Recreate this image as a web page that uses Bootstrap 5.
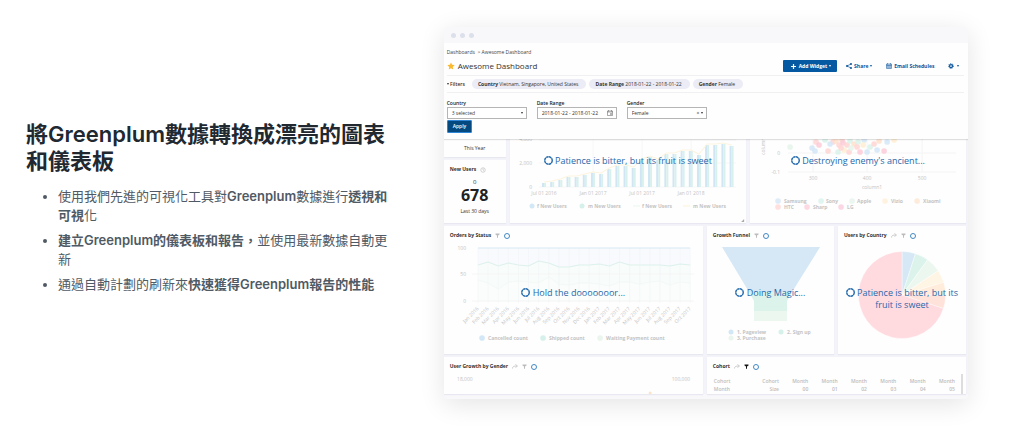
<!DOCTYPE html>
<html lang="zh-Hant">
<head>
<meta charset="utf-8">
<meta name="viewport" content="width=device-width, initial-scale=1">
<title>Greenplum</title>
<link href="https://cdn.jsdelivr.net/npm/bootstrap@5.3.0/dist/css/bootstrap.min.css" rel="stylesheet">
<style>
body{font-family:Inter,"Noto Sans CJK TC",sans-serif;color:#505a64;background:#fff}
.feature{padding:27px 0 33px}
.copy{padding-left:26px;padding-right:32px}
.shot{padding-left:17px;padding-right:56px}
h2{font-size:22px;line-height:27px;font-weight:600;color:#212830;margin-bottom:12px}
.copy ul{padding-left:32px;font-size:13px;line-height:19px;margin-bottom:12px}
.copy li+li{margin-top:6px}
.copy strong{font-weight:600}
.app{font:5px/7px "Open Sans",sans-serif;color:#333;background:#fefefe;border-radius:4px;overflow:hidden;box-shadow:0 5px 26px rgba(0,0,0,.11)}
.chrome{height:16px;padding-left:7px;gap:4px;background:#f8f8fb}
.chrome i{width:5px;height:5px;border-radius:50%;background:#dce0ea}
.head{padding:6px 4px 6px 3px;box-shadow:0 1px 1px rgba(0,0,0,.12);position:relative;z-index:2;background:#fefefe}
.crumbs{color:#444;padding-bottom:1px}
.crumbs a{color:inherit;text-decoration:none}
.titlebar{height:19px;border-bottom:1px solid #f0f0f3}
h3{font-size:8px;line-height:12px;font-weight:400;margin:0;padding-left:3px;color:#333}
.acts{gap:14px;padding-right:5px}
.act{font-size:5px;line-height:7px;font-weight:700;color:#0b559c;border:0;padding:0;border-radius:0;white-space:nowrap}
.act-main,.act-main:hover{background:#0559a2;color:#fff;height:12px;padding:0 6px 0 8px;border-radius:1px;margin-right:-5px}
.car{display:inline-block;border:1px solid transparent;border-top:2px solid;border-bottom:0;vertical-align:1px}
.filters{height:17px;border-bottom:1px solid #f0f0f3;gap:3px}
.chip{background:#ebecf6;border-radius:6px;height:10px;line-height:10px;padding:0 8px 0 6px;font-weight:500}
.chip b{font-weight:700}
.fields{gap:10px;padding-top:6px}
.fld{width:80px;position:relative}
.fld label{display:block;line-height:8px;color:#222;font-weight:600}
.fld select,.fld input{display:block;width:100%;height:12px;border:1px solid #b5b5b5;border-radius:0;background:#fff;font-size:5px;font-weight:500;line-height:8px;padding:0 4px;color:#333;appearance:none}
.mark-r{position:absolute;right:4px;bottom:2px;line-height:8px;pointer-events:none}
.apply{display:block;background:#044a80;color:#fff;border:1px solid #2f86d6;border-radius:1px;font-size:5px;line-height:7px;font-weight:600;padding:2px 5px;height:13px;margin-top:1px}
.board{background:#f3f3f9;padding-right:2px;border-bottom:5px solid #f8f8fb}
.tiles{display:grid;gap:4px;margin-bottom:3px}
.t1{grid-template-columns:62fr 236fr 216fr}
.t2{grid-template-columns:259fr 127fr 128fr}
.t3{grid-template-columns:259fr 259fr;margin:0}
.stack{gap:3px}
.tile{background:#fefefe;position:relative;min-width:0;box-shadow:0 1px 1px #e8e8f0;overflow:hidden}
.tile svg.plot{display:block;width:100%;height:auto}
.tile h4{position:absolute;left:6px;top:6px;margin:0;font-size:5px;line-height:7px;font-weight:700;color:#333;display:flex;gap:4px;align-items:center;white-space:nowrap}
.busy{position:absolute;left:0;right:0;top:61px;font-size:9px;line-height:12px;text-align:center;color:#1f68ab;padding:0 3px}
.t1 .busy{top:16px}
.busy svg{width:9px;height:9px;vertical-align:-1px}
.spin-s{width:6px;height:6px;border:1px solid #4389c6;border-radius:50%}
.plot text{font-size:5px;fill:#c4c4c4;font-family:"Open Sans",sans-serif}
.plot .lg text{font-weight:700;fill:#c4c4c4}
.e{text-anchor:end}.m{text-anchor:middle}
.year{padding:6px 0 5px}
.users{padding-top:18px}
.cohort-tile{padding:0 11px 0 7px}
.cohort{width:100%;table-layout:fixed;color:#bdbdbd;margin-top:20px;line-height:8px}
.cohort th{font-weight:600;text-align:right;padding:0;line-height:8px}
.cohort th:first-child{text-align:left}
.rail{position:absolute;right:3px;top:17px;bottom:0;width:2px;background:#ddd}
.zero{font-size:6px;line-height:8px}
.big{font-size:16px;line-height:18px;font-weight:700;color:#222}
</style>
</head>
<body>
<svg class="d-none"><symbol id="ring" viewBox="0 0 18 18"><circle cx="9" cy="9" r="7.500" fill="none" stroke="#1f68ab" stroke-width="2.800" stroke-dasharray="5.200 .69"/></symbol>
<symbol id="funnel" viewBox="0 0 10 10"><path d="M1 1h8v2L6 5v5L4 9V5L1 3z"/></symbol>
<symbol id="arrow" viewBox="0 0 12 10"><path d="M1 9c0-4 3-5 8-5M7 1l4 3-4 3" fill="none" stroke="#bbb" stroke-width="1.500"/></symbol></svg>
<section class="feature container-fluid px-0 overflow-hidden">
<div class="row g-0 align-items-center">
<div class="col-5 copy">
<h2>將Greenplum數據轉換成漂亮的圖表和儀表板</h2>
<ul>
<li>使用我們先進的可視化工具對<strong>Greenplum</strong>數據進行<strong>透視和可視</strong>化</li>
<li><strong>建立Greenplum的儀表板和報告，</strong>並使用最新數據自動更新</li>
<li>通過自動計劃的刷新來<strong>快速獲得Greenplum報告的性能</strong></li>
</ul>
</div>
<div class="col-7 shot">
<div class="app">
<div class="chrome d-flex align-items-center"><i></i><i></i><i></i></div>
<header class="head">
<div class="crumbs"><a href="#">Dashboards</a> &nbsp;&gt;&nbsp;Awesome Dashboard</div>
<div class="titlebar d-flex align-items-center">
<svg width="8" height="8" viewBox="0 0 20 20" fill="#fbb92f"><path d="M10 1l2.800 5.900 6.300.9-4.600 4.500 1.100 6.400L10 15.600l-5.600 3.100 1.100-6.400L.9 7.800l6.300-.9z"/></svg>
<h3 class="flex-grow-1">Awesome Dashboard</h3>
<div class="acts d-flex align-items-center">
<button class="act act-main">
<svg width="5" height="5" viewBox="0 0 10 10" stroke="#fff" stroke-width="2.400"><path d="M5 0v10M0 5h10"/></svg>
&nbsp;Add Widget <span class="car"></span></button>
<button class="act bg-transparent"><svg width="6" height="6" viewBox="0 0 12 12" fill="#0b559c" stroke="#0b559c" stroke-width="1.300"><path d="M10 2L2 6l8 4" fill="none"/><circle cx="10" cy="2" r="1.500"/><circle cx="2" cy="6" r="1.500"/><circle cx="10" cy="10" r="1.500"/></svg>&nbsp; Share <span class="car"></span></button>
<button class="act bg-transparent"><svg width="6" height="6" viewBox="0 0 12 12" fill="none" stroke="#0b559c"><path d="M1 2h10v9H1zM1 4h10M1 5h10M1 8h10M4 5v6M8 5v6M3 0v3M9 0v3"/></svg>&nbsp; Email Schedules</button>
<button class="act bg-transparent" aria-label="Settings"><svg width="6" height="6" viewBox="0 0 12 12" fill="none" stroke="#0b559c"><circle cx="6" cy="6" r="3" stroke-width="2.500"/><circle cx="6" cy="6" r="4.800" stroke-width="1.800" stroke-dasharray="2 1.770"/></svg>&nbsp; <span class="car"></span></button>
</div>
</div>
<div class="filters d-flex align-items-center">
<span class="me-1"><span class="car"></span> <b class="fw-semibold">Filters</b></span>
<span class="chip"><b>Country</b> Vietnam, Singapore, United States</span>
<span class="chip"><b>Date Range</b> 2018-01-22 - 2018-01-22</span>
<span class="chip"><b>Gender</b> Female</span>
</div>
<div class="fields d-flex">
<div class="fld"><label for="c">Country</label><select id="c"><option>3 selected</option></select><span class="mark-r"><span class="car"></span></span></div>
<div class="fld"><label for="d">Date Range</label><input id="d" value="2018-01-22 - 2018-01-22"><svg class="mark-r" width="6" height="8" viewBox="0 0 12 16" fill="none" stroke="#555"><path d="M1 4h10v9H1zM1 6h10M3 2v3M9 2v3M7 9h2v2H7z"/></svg></div>
<div class="fld"><label for="g">Gender</label><select id="g"><option>Female</option></select><span class="mark-r">×&nbsp;<span class="car"></span></span></div>
</div>
<button class="apply">Apply</button>
</header>
<div class="board">
<div class="tiles t1">
<div class="stack d-flex flex-column text-center">
<div class="tile year">This Year</div>
<div class="tile users flex-grow-1"><h4>New Users <svg width="6" height="6" viewBox="0 0 12 12" fill="none" stroke="#aaa"><circle cx="6" cy="6" r="4.500"/><path d="M6 3v3l2 1"/></svg></h4><div class="zero">0</div><div class="big">678</div><div class="mt-1">Last 30 days</div></div>
</div>
<div class="tile"><svg class="plot" viewBox="0 0 236 84">
<path d="M29 1H226M29 24H226M29 48H226M83 0V48M132 0V48M181 0V48" stroke="#f5f5f5" stroke-width=".8"/>
<g id="bars"></g>
<g class="e"><text x="22" y="2">4,000</text><text x="22" y="26">2,000</text><text x="22" y="50">0</text></g>
<g class="m"><text x="34" y="56">Jul 01 2016</text><text x="83" y="56">Jan 01 2017</text><text x="132" y="56">Jul 01 2017</text><text x="181" y="56">Jan 01 2018</text></g>
<circle cx="22" cy="67" r="2.500" fill="#d3e8f6"/><circle cx="72" cy="67" r="2.500" fill="#d5f1ea"/><path d="M123 67h7" stroke="#e9f5ed"/><path d="M173 67h7" stroke="#fdf1d8"/>
<g class="lg"><text x="27" y="69">f New Users</text><text x="78" y="69">m New Users</text><text x="132" y="69">f New Users</text><text x="183" y="69">m New Users</text></g>
<path d="M234 80v3h-3z" fill="#aaa"/></svg>
<div class="busy"><svg><use href="#ring"/></svg> Patience is bitter, but its fruit is sweet</div></div>
<div class="tile"><svg class="plot" viewBox="0 0 216 84">
<path d="M38 14H206M38 33H206M63 0V33M117 0V33M172 0V33" stroke="#f3f3f3" stroke-width=".8"/>
<g id="dots"></g>
<text x="30" y="16" class="e">0</text><text x="30" y="35" class="e">-0.1</text><text transform="translate(15 16) rotate(-90)">column2</text>
<g class="m"><text x="63" y="41">300</text><text x="117" y="41">400</text><text x="172" y="41">500</text><text x="122" y="50">column1</text></g>
<g><circle cx="28" cy="62" r="2.800" fill="#deebf8"/><circle cx="71" cy="62" r="2.800" fill="#e0f5ef"/><circle cx="102" cy="62" r="2.800" fill="#eaf6ef"/><circle cx="135" cy="62" r="2.800" fill="#fff3e0"/><circle cx="167" cy="62" r="2.800" fill="#ffebdc"/><circle cx="28" cy="68" r="2.800" fill="#ffe0de"/><circle cx="57" cy="68" r="2.800" fill="#fddae2"/><circle cx="91" cy="68" r="2.800" fill="#fbd6e5"/></g>
<g class="lg"><text x="34" y="64">Samsung</text><text x="76" y="64">Sony</text><text x="107" y="64">Apple</text><text x="141" y="64">Vizio</text><text x="173" y="64">Xiaomi</text><text x="34" y="70">HTC</text><text x="63" y="70">Sharp</text><text x="97" y="70">LG</text></g></svg>
<div class="busy"><svg><use href="#ring"/></svg> Destroying enemy's ancient...</div></div>
</div>
<div class="tiles t2">
<div class="tile"><h4>Orders by Status <svg width="5" height="5" fill="#bbb"><use href="#funnel"/></svg><span class="spin-s"></span></h4>
<svg class="plot" viewBox="0 0 259 128"><g id="orders"></g>
<g class="e"><text x="22" y="24">100</text><text x="22" y="50">50</text><text x="22" y="77">0</text></g>
<circle cx="38" cy="112" r="2.800" fill="#d3e8f6"/><circle cx="99" cy="112" r="2.800" fill="#d5f1ea"/><circle cx="156" cy="112" r="2.800" fill="#e9f5ed"/>
<g class="lg"><text x="44" y="114">Cancelled count</text><text x="105" y="114">Shipped count</text><text x="162" y="114">Waiting Payment count</text></g></svg>
<div class="busy"><svg><use href="#ring"/></svg> Hold the dooooooor...</div></div>
<div class="tile"><h4>Growth Funnel <svg width="5" height="5" fill="#bbb"><use href="#funnel"/></svg><span class="spin-s"></span></h4>
<svg class="plot" viewBox="0 0 127 128"><path d="M15 21H113L85 66H42z" fill="#d6e8f5"/><path d="M42 66H85L80 75V85H47V75z" fill="#dcf3ec"/><path d="M47 85H80V95H47z" fill="#ecf7ef"/>
<circle cx="24" cy="106" r="2.500" fill="#d3e8f6"/><circle cx="74" cy="106" r="2.500" fill="#d5f1ea"/><circle cx="24" cy="112" r="2.500" fill="#e9f5ed"/>
<g class="lg"><text x="30" y="108">1. Pageview</text><text x="80" y="108">2. Sign up</text><text x="30" y="114">3. Purchase</text></g></svg>
<div class="busy"><svg><use href="#ring"/></svg> Doing Magic...</div></div>
<div class="tile"><h4>Users by Country <svg width="6" height="5"><use href="#arrow"/></svg><svg width="5" height="5" fill="#bbb"><use href="#funnel"/></svg><span class="spin-s"></span></h4>
<svg class="plot" viewBox="0 0 128 128"><g id="pie"></g></svg>
<div class="busy"><svg><use href="#ring"/></svg> Patience is bitter, but its fruit is sweet</div></div>
</div>
<div class="tiles t3">
<div class="tile"><h4>User Growth by Gender <svg width="6" height="5"><use href="#arrow"/></svg><svg width="5" height="5" fill="#bbb"><use href="#funnel"/></svg><span class="spin-s"></span></h4>
<svg class="plot" viewBox="0 0 259 37"><text x="13" y="24">18,000</text><text x="246" y="24" class="e">100,000</text><circle cx="206" cy="36" r="1.500" fill="#fde3c8"/></svg></div>
<div class="tile cohort-tile"><h4>Cohort <svg width="6" height="5"><use href="#arrow"/></svg><svg width="5" height="5" fill="#111"><use href="#funnel"/></svg><span class="spin-s"></span></h4>
<table class="cohort"><colgroup><col style="width:15%"><col style="width:12%"></colgroup><thead><tr><th>Cohort<br>Month</th><th>Cohort<br>Size</th><th>Month<br>00</th><th>Month<br>01</th><th>Month<br>02</th><th>Month<br>03</th><th>Month<br>04</th><th>Month<br>05</th></tr></thead></table>
<span class="rail"></span></div>
</div>
</div>
</div>
</div>
</div>
</section>
<script src="https://cdn.jsdelivr.net/npm/bootstrap@5.3.0/dist/js/bootstrap.bundle.min.js"></script>
<script>
const put=(id,s)=>document.getElementById(id).innerHTML=s;
// new users per month
const h=[4,5,7,10,10,12,14,13,18,21,21,19,27,30,27,33,33,36,36,32,42,42,43,41];
put('bars',h.map((v,i)=>{const x=32+i*8.15;return `<rect x="${x}" y="${48-v}" width="2" height="${v}" fill="#d0e6f4"/><rect x="${x+2}" y="${48-v}" width="2" height="${v}" fill="#d9f1ec"/>`}).join('')+
`<polyline fill="none" stroke="#fcf4de" points="${h.map((v,i)=>`${34+i*8.15},${47-v}`).join(' ')}"/>`);
// scatter points: x, y, colour index
const col=['#d5e6f7','#d9f2ea','#e4f4ea','#ffeed2','#ffe2cd','#ffd5d3','#fbcbd8'];
const pts=[[40,8,2],[62,9,0],[66,3,5],[69,6,6],[65,12,0],[75,1,1],[78,12,5],[83,3,5],[86,2,4],[89,6,5],[92,1,5],[93,4,6],[97,6,5],[94,11,3],[99,13,5],[100,2,1],[104,5,4],[108,3,1],[107,8,5],[110,13,6],[114,1,0],[113,6,3],[117,13,0],[120,8,1],[124,5,5],[127,11,0],[129,2,4],[134,12,6],[137,3,0],[144,1,3],[88,13,1],[80,5,0],[91,9,5],[101,9,2]];
put('dots',pts.map(p=>`<circle cx="${p[0]}" cy="${p[1]}" r="2.800" opacity=".85" fill="${col[p[2]]}"/>`).join(''));
// order status shares
const a=[39,36,40,37,39,40,35,37,41,41,39,39,38,40,36,39,39,39,39,40,38,39],b=[54,57,63,56,55,56,57,51,58,59,57,57,58,60,56,56,58,56,55,59,56,57];
const X=i=>34+i*10.1,L=d=>d.map((v,i)=>`${X(i)},${v}`).join(' ');
const mo='Jan Feb Mar Apr May Jun Jul Aug Sep Oct Nov Dec'.split(' ');
put('orders',`<rect x="34" y="22" width="212" height="53" fill="#f8fafd"/><polygon points="34,75 ${L(a)} 246,75" fill="#f8fcfb"/><polygon points="34,75 ${L(b)} 246,75" fill="#fafdfb"/>`+
a.map((v,i)=>`<path d="M${X(i)} 22V77" stroke="#f1f3f5" stroke-width=".5"/><text class="e" transform="translate(${X(i)+1} 83) rotate(-45)">${mo[i%12]} ${i<12?2016:2017}</text>`).join('')+
`<path d="M28 48H250M28 75H250" stroke="#f0f0f0" stroke-width=".6"/><path d="M34 22H246" stroke="#d5e7f3"/><polyline points="${L(a)}" fill="none" stroke="#ddf1ec"/><polyline points="${L(b)}" fill="none" stroke="#f1f8f3" stroke-width=".7"/>`);
// country shares, by boundary angle
const s=[[0,18,'#d6e8f5'],[18,36,'#dcf3ec'],[36,56,'#ebf7ef'],[56,73,'#fff5e4'],[73,90,'#ffecda'],[90,108,'#ffe2d9'],[108,360,'#ffdbe0']];
const P=d=>{const r=d*Math.PI/180;return (64+43.5*Math.sin(r))+' '+(69-43.5*Math.cos(r))};
put('pie',s.map(q=>`<path d="M64 69L${P(q[0])}A43.500 43.500 0 ${q[1]-q[0]>180?1:0} 1 ${P(q[1])}Z" fill="${q[2]}" stroke="#fff" stroke-width=".4"/>`).join(''));
</script>
</body>
</html>
